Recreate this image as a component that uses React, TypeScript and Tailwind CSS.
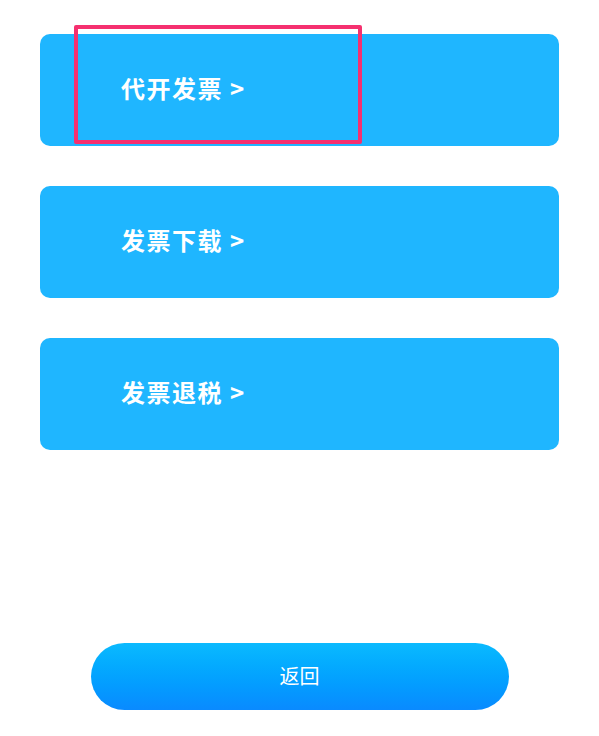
const items = ['代开发票', '发票下载', '发票退税'];

export default function App() {
  return (
    <div
      className="relative w-[599px] h-[736px] bg-white flex flex-col"
      style={{ fontFamily: '"Noto Sans CJK SC", "Noto Sans", sans-serif' }}
    >
      <div className="flex flex-col gap-[40px] px-[40px] pt-[34px]">
        {items.map((label) => (
          <div
            key={label}
            className="h-[112px] w-[519px] rounded-[10px] bg-[#1fb6ff] flex items-center pl-[81px] pb-[4px]"
          >
            <span className="text-white font-bold text-[24px] leading-none tracking-[1.5px]">{label} &gt;</span>
          </div>
        ))}
      </div>

      {/* highlight box */}
      <div className="absolute left-[74px] top-[25px] w-[288px] h-[119px] border-[4px] border-[#f5306f] rounded-[2px]" />

      <div className="mt-auto mb-[26px] flex justify-center">
        <button className="w-[418px] h-[67px] rounded-full bg-gradient-to-b from-[#0bbafe] to-[#0a8aff] text-white text-[20px] pb-[2px]">
          返回
        </button>
      </div>
    </div>
  );
}
